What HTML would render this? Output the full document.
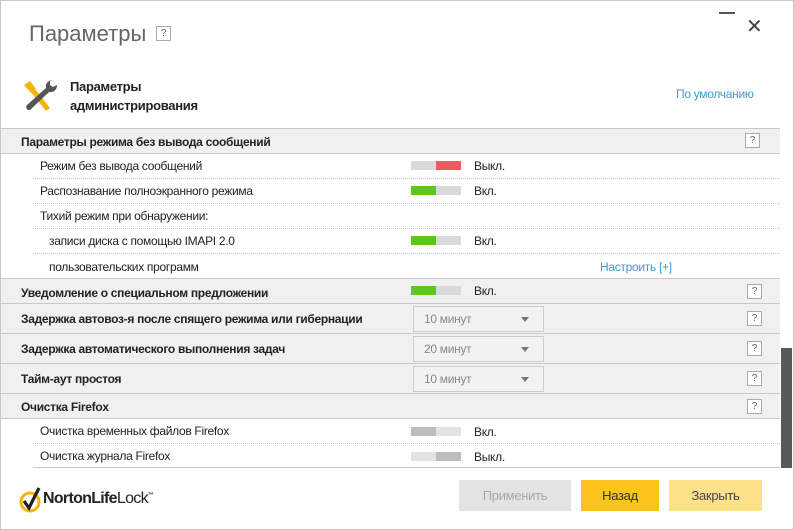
<!DOCTYPE html>
<html><head><meta charset="utf-8"><style>
*{margin:0;padding:0;box-sizing:border-box}
body{width:794px;height:530px;background:#fff;font-family:"Liberation Sans",sans-serif;color:#222;position:relative;overflow:hidden;font-size:12px;letter-spacing:-0.3px}
.win{position:absolute;left:0;top:0;width:794px;height:530px;border:1px solid #c8c8c8}
.a{position:absolute}
.q{position:absolute;width:15px;height:15px;border:1px solid #aaa;background:#fff;font-size:10px;color:#666;text-align:center;line-height:13px;letter-spacing:0}
.sec{position:absolute;left:1px;width:779px;background:#f0f0f0;border-bottom:1px solid #c9c9c9;font-weight:bold;font-size:12px}
.row{position:absolute;left:33px;width:747px;border-bottom:1px dotted #c4c4c4;font-size:12px}
.tg{position:absolute;width:50px;height:9px;background:#d9d9d9}
.tg i{position:absolute;top:0;width:25px;height:9px}
.dd{position:absolute;left:413px;width:131px;height:26px;border:1px solid #ccc;background:#f2f2f2;color:#888;font-size:12px;line-height:24px;padding-left:10px}
.dd:after{content:"";position:absolute;right:14px;top:10px;border:4px solid transparent;border-top:5px solid #777}
.btn{position:absolute;top:480px;height:31px;font-size:13px;text-align:center;line-height:31px}
</style></head><body><div class="win"></div>
<div class="a" style="left:29px;top:21px;font-size:22px;color:#666;letter-spacing:0">Параметры</div>
<div class="q" style="left:156px;top:26px">?</div>
<div class="a" style="left:719px;top:12px;width:16px;height:2px;background:#555"></div>
<div class="a" style="left:746px;top:14px;font-size:20px;color:#444">✕</div>
<svg class="a" style="left:22px;top:79px" width="36" height="34" viewBox="0 0 36 34">
<path d="M2 6l6-4 6 8-5 4z" fill="#f5b400"/>
<path d="M9 13l4-3 15 19-4 3z" fill="#f5b400"/>
<path d="M31 1c-5 0-8 4-7 8L5 26c-2 2 0 6 3 5L27 13c4 1 8-2 8-7l-4 2-3-2 0-4z" fill="#555"/>
</svg>
<div class="a" style="left:70px;top:77px;font-weight:bold;font-size:13px;line-height:19px">Параметры<br>администрирования</div>
<div class="a" style="left:676px;top:87px;color:#3b9bd6;font-size:12px">По умолчанию</div>
<div class="a" style="left:1px;top:128px;width:779px;border-top:1px solid #c9c9c9"></div>
<div class="sec" style="top:129px;height:25px;padding:6px 0 0 20px">Параметры режима без вывода сообщений</div><div class="q" style="left:745px;top:133px">?</div>
<div class="row" style="top:154px;height:25px;padding:5px 0 0 7px">Режим без вывода сообщений</div>
<div class="tg" style="left:411px;top:161px"><i style="left:25px;background:#e85e5e"></i></div><div class="a" style="left:474px;top:159px">Выкл.</div>
<div class="row" style="top:179px;height:25px;padding:5px 0 0 7px">Распознавание полноэкранного режима</div>
<div class="tg" style="left:411px;top:186px"><i style="left:0;background:#5cc91a"></i></div><div class="a" style="left:474px;top:184px">Вкл.</div>
<div class="row" style="top:204px;height:25px;padding:5px 0 0 7px">Тихий режим при обнаружении:</div>
<div class="row" style="top:229px;height:25px;padding:5px 0 0 16px">записи диска с помощью IMAPI 2.0</div>
<div class="tg" style="left:411px;top:236px"><i style="left:0;background:#5cc91a"></i></div><div class="a" style="left:474px;top:234px">Вкл.</div>
<div class="row" style="top:254px;height:25px;padding:6px 0 0 16px;border-bottom:none">пользовательских программ</div>
<div class="a" style="left:600px;top:260px;color:#3b9bd6">Настроить [+]</div>
<div class="sec" style="top:278px;height:26px;padding:7px 0 0 20px;border-top:1px solid #c9c9c9">Уведомление о специальном предложении</div>
<div class="tg" style="left:411px;top:286px"><i style="left:0;background:#5cc91a"></i></div><div class="a" style="left:474px;top:284px">Вкл.</div><div class="q" style="left:747px;top:284px">?</div>
<div class="sec" style="top:304px;height:30px;padding:8px 0 0 20px">Задержка автовоз-я после спящего режима или гибернации</div>
<div class="dd" style="top:306px">10 минут</div><div class="q" style="left:747px;top:311px">?</div>
<div class="sec" style="top:334px;height:30px;padding:8px 0 0 20px">Задержка автоматического выполнения задач</div>
<div class="dd" style="top:336px">20 минут</div><div class="q" style="left:747px;top:341px">?</div>
<div class="sec" style="top:364px;height:30px;padding:8px 0 0 20px">Тайм-аут простоя</div>
<div class="dd" style="top:366px">10 минут</div><div class="q" style="left:747px;top:371px">?</div>
<div class="sec" style="top:394px;height:25px;padding:6px 0 0 20px">Очистка Firefox</div><div class="q" style="left:747px;top:399px">?</div>
<div class="row" style="top:419px;height:25px;padding:5px 0 0 7px">Очистка временных файлов Firefox</div>
<div class="tg" style="left:411px;top:427px;background:#e3e3e3"><i style="left:0;background:#bdbdbd"></i></div><div class="a" style="left:474px;top:425px">Вкл.</div>
<div class="row" style="top:444px;height:24px;padding:5px 0 0 7px;border-bottom:1px solid #c9c9c9">Очистка журнала Firefox</div>
<div class="tg" style="left:411px;top:452px;background:#e3e3e3"><i style="left:25px;background:#bdbdbd"></i></div><div class="a" style="left:474px;top:450px">Выкл.</div>
<div class="a" style="left:781px;top:348px;width:11px;height:120px;background:#595959"></div>
<svg class="a" style="left:19px;top:486px" width="26" height="28" viewBox="0 0 26 28"><circle cx="11" cy="16" r="9" fill="none" stroke="#f5b400" stroke-width="3"/><path d="M5 15l5 7 10-20" fill="none" stroke="#222" stroke-width="3.2"/></svg>
<div class="a" style="left:43px;top:490px;font-size:16px;font-weight:bold;color:#222;letter-spacing:-0.7px">NortonLife<span style="font-weight:normal">Lock</span><sup style="font-size:6px">™</sup></div>
<div class="btn" style="left:459px;width:112px;background:#e3e3e3;color:#a8a8a8">Применить</div>
<div class="btn" style="left:581px;width:78px;background:#fbc31c;color:#333">Назад</div>
<div class="btn" style="left:669px;width:93px;background:#fde08a;color:#444">Закрыть</div>
</body></html>
